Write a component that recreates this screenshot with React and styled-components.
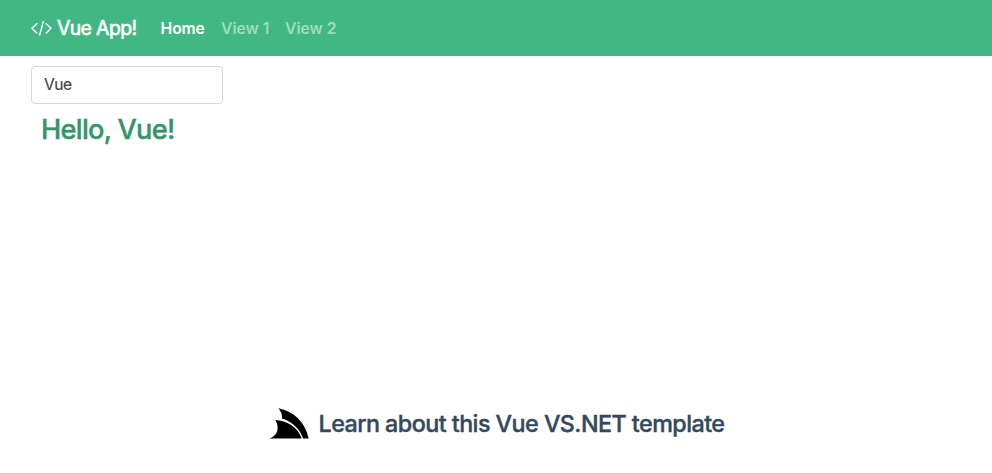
import React from "react";
import styled, { createGlobalStyle } from "styled-components";

const GlobalStyle = createGlobalStyle`
  * { box-sizing: border-box; }
  body { margin: 0; background: #fff; font-family: Inter, "Liberation Sans", sans-serif; }
`;
const Page = styled.div`
  height: 473px;
  display: flex;
  flex-direction: column;
  overflow: hidden;
`;
const Navbar = styled.nav`
  height: 56px;
  flex: none;
  display: flex;
  align-items: center;
  padding-left: 31px;
  background: #41b883;
`;
const Brand = styled.a`
  display: flex;
  align-items: center;
  gap: 5px;
  width: 129.6px;
  color: #fff;
  font-size: 19.4px;
  line-height: 30px;
  letter-spacing: -0.62px;
  -webkit-text-stroke: 0.6px;
  white-space: nowrap;
`;
const NavLink = styled.a`
  width: ${(p) => p.$width}px;
  padding-top: 2px;
  color: ${(p) => (p.$active ? "#fff" : "rgba(255,255,255,.5)")};
  font-size: 15.7px;
  font-weight: 600;
  line-height: 24px;
  letter-spacing: ${(p) => (p.$active ? -0.15 : 0)}px;
  white-space: nowrap;
`;
const Main = styled.main`
  flex: 1;
  padding: 10px 31px 0;
`;
const NameInput = styled.input`
  display: block;
  width: 192px;
  height: 38px;
  padding: 5px 12px 7px;
  border: 1px solid #d5d7d8;
  border-radius: 4px;
  color: #44484b;
  font: 15.6px/24px Inter, sans-serif;
  letter-spacing: -0.5px;
  -webkit-text-stroke: 0.2px;
  outline: none;
`;
const Greeting = styled.h3`
  margin: 9px 10px 7px;
  color: #35956a;
  font-size: 27.2px;
  font-weight: 500;
  line-height: 34px;
  letter-spacing: -0.72px;
  -webkit-text-stroke: 0.4px;
`;
const Footer = styled.footer`
  height: 73px;
  display: flex;
  align-items: flex-start;
  padding: 8px 0 0 269px;
  gap: 8.5px;
`;
const LearnLink = styled.a`
  color: #34495e;
  font-size: 23.3px;
  font-weight: 500;
  line-height: 32px;
  letter-spacing: -0.54px;
  -webkit-text-stroke: 0.4px;
  white-space: nowrap;
`;

export default function App() {
  return (
    <Page>
      <GlobalStyle />
      <Navbar>
        <Brand>
          <svg width="21" height="16" viewBox="0 0 21 16" fill="none" stroke="#fff" strokeWidth="1.4">
            <path d="M6.3 3.2 1 8.3l5.3 5.1M14.7 3.2 20 8.3l-5.3 5.1M12.5 1 8.5 15.5" />
          </svg>
          Vue App!
        </Brand>
        <NavLink $active $width={60.4}>Home</NavLink>
        <NavLink $width={64}>View 1</NavLink>
        <NavLink $width={64}>View 2</NavLink>
      </Navbar>
      <Main>
        <NameInput defaultValue="Vue" />
        <Greeting>Hello, Vue!</Greeting>
      </Main>
      <Footer>
        <svg width="41" height="31" viewBox="0 0 41 31">
          <path d="M9.3 0.3C25 3.5 36 14 39.7 30.5H34.2C30 20 23 13.5 13 10.5Q13.4 4.5 9.3 0.3ZM6.3 12C18 12.5 28 18.5 32.8 30.5H0.5C8.5 27.5 11 20 6.3 12Z" />
        </svg>
        <LearnLink>Learn about this Vue VS.NET template</LearnLink>
      </Footer>
    </Page>
  );
}
